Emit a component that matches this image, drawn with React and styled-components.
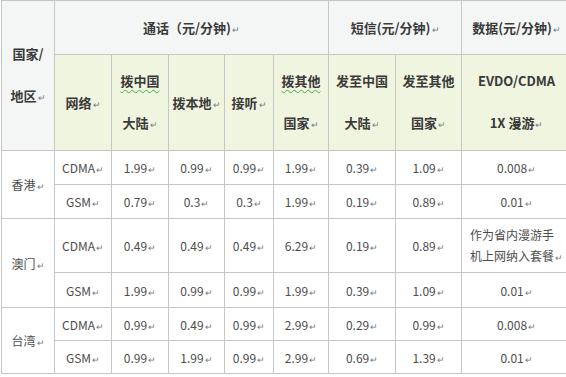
import React from 'react'
import styled, { createGlobalStyle } from 'styled-components'

const GlobalStyle = createGlobalStyle`
  body {
    margin: 0;
    background: #ffffff;
    font-family: "Noto Sans CJK SC", "Noto Sans", sans-serif;
  }
`;

const widths = [53, 57, 57, 56, 49, 55, 67, 66, 110];

const rows = [
  { region: '香港', span: 2, net: 'CDMA', h: 34, vals: ['1.99', '0.99', '0.99', '1.99', '0.39', '1.09', '0.008'] },
  { net: 'GSM', h: 34, vals: ['0.79', '0.3', '0.3', '1.99', '0.19', '0.89', '0.01'] },
  { region: '澳门', span: 2, net: 'CDMA', h: 54, vals: ['0.49', '0.49', '0.49', '6.29', '0.19', '0.89', null] },
  { net: 'GSM', h: 35, vals: ['1.99', '0.99', '0.99', '1.99', '0.39', '1.09', '0.01'] },
  { region: '台湾', span: 2, net: 'CDMA', h: 33, vals: ['0.99', '0.49', '0.99', '2.99', '0.29', '0.99', '0.008'] },
  { net: 'GSM', h: 33, vals: ['0.99', '1.99', '0.99', '2.99', '0.69', '1.39', '0.01'] },
];

const Mark = () => <Enter>↵</Enter>;

class App extends React.Component {
  render() {
    return (
      <>
        <GlobalStyle />
        <Page>
          <Table>
            <colgroup>
              {widths.map((w, i) => <col key={i} style={{ width: w }} />)}
            </colgroup>
            <thead>
              <Row h={54}>
                <HeadCell rowSpan={2} tone="grey">
                  <Lines>国家/<br />地区<Mark /></Lines>
                </HeadCell>
                <HeadCell colSpan={5} tone="grey">通话（元/分钟)<Mark /></HeadCell>
                <HeadCell colSpan={2} tone="grey">短信(元/分钟)<Mark /></HeadCell>
                <HeadCell tone="grey">数据(元/分钟)<Mark /></HeadCell>
              </Row>
              <Row h={96}>
                <HeadCell tone="green">网络<Mark /></HeadCell>
                <HeadCell tone="green"><Lines><Wavy>拨中国</Wavy><br />大陆<Mark /></Lines></HeadCell>
                <HeadCell tone="green">拨本地<Mark /></HeadCell>
                <HeadCell tone="green">接听<Mark /></HeadCell>
                <HeadCell tone="green"><Lines><Wavy>拨其他</Wavy><br />国家<Mark /></Lines></HeadCell>
                <HeadCell tone="green"><Lines>发至中国<br />大陆<Mark /></Lines></HeadCell>
                <HeadCell tone="green"><Lines>发至其他<br />国家<Mark /></Lines></HeadCell>
                <HeadCell tone="green"><Lines>EVDO/CDMA<br />1X 漫游<Mark /></Lines></HeadCell>
              </Row>
            </thead>
            <tbody>
              {rows.map((r, i) => (
                <Row key={i} h={r.h}>
                  {r.region && <Cell rowSpan={r.span}>{r.region}<Mark /></Cell>}
                  <Cell>{r.net}<Mark /></Cell>
                  {r.vals.map((v, j) =>
                    v === null ? (
                      <Cell key={j}><Note>作为省内漫游手<br />机上网纳入套餐<Mark /></Note></Cell>
                    ) : (
                      <Cell key={j}>{v}<Mark /></Cell>
                    )
                  )}
                </Row>
              ))}
            </tbody>
          </Table>
        </Page>
      </>
    )
  }
}

const Page = styled.div`
  width: 566px;
  height: 377px;
  overflow: hidden;
  padding-left: 1px;
  box-sizing: border-box;
`;

const Table = styled.table`
  border-collapse: collapse;
  table-layout: fixed;
  width: 570px;
  border-left: 1px solid #a9a9a9;
`;

const Row = styled.tr`
  height: ${p => p.h}px;
`;

const HeadCell = styled.th`
  border: 1px solid #c6c6c6;
  background: ${p => (p.tone === 'green' ? '#f0f5df' : '#f4f6f6')};
  color: #3a3a3a;
  font-size: 13px;
  font-weight: bold;
  text-align: center;
  vertical-align: middle;
  padding: 0;
  white-space: nowrap;
`;

const Cell = styled.td`
  border: 1px solid #c6c6c6;
  color: #4d4d4d;
  font-size: 12px;
  text-align: center;
  vertical-align: middle;
  padding: 0;
  white-space: nowrap;
`;

const Lines = styled.div`
  line-height: 42px;
`;

const Note = styled.div`
  line-height: 21px;
  text-align: left;
  padding-left: 8px;
`;

const Wavy = styled.span`
  text-decoration: underline wavy #3cb043;
  text-decoration-thickness: 1px;
  text-underline-offset: 3px;
`;

const Enter = styled.span`
  font-size: 9px;
  font-weight: normal;
  color: #7a7a7a;
  margin-left: 1px;
`;

export default App
